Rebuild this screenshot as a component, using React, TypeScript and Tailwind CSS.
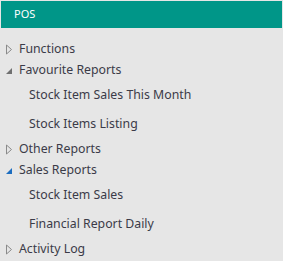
import React from 'react';

type Node = { label: string; state: 'closed' | 'open' | 'active'; children?: string[] };

const nodes: Node[] = [
  { label: 'Functions', state: 'closed' },
  { label: 'Favourite Reports', state: 'open', children: ['Stock Item Sales This Month', 'Stock Items Listing'] },
  { label: 'Other Reports', state: 'closed' },
  { label: 'Sales Reports', state: 'active', children: ['Stock Item Sales', 'Financial Report Daily'] },
  { label: 'Activity Log', state: 'closed' },
];

function Arrow({ state }: { state: Node['state'] }) {
  if (state === 'closed') {
    return (
      <svg width="8" height="11" viewBox="0 0 8 11" className="shrink-0">
        <path d="M1.5 1 L6.5 5.5 L1.5 10 Z" fill="none" stroke="#8a8a8a" strokeWidth="1" />
      </svg>
    );
  }
  return (
    <svg width="8" height="11" viewBox="0 0 8 11" className="shrink-0">
      <path d="M7 3 L7 9 L1 9 Z" fill={state === 'active' ? '#1c6dbf' : '#707070'} />
    </svg>
  );
}

export default function App() {
  return (
    <div className="w-[283px] h-[261px] bg-[#e6e6e6] p-px font-['Noto_Sans',sans-serif] text-[#3b3b48] overflow-hidden">
      <div className="h-[27px] bg-[#009688] text-white text-[11px] flex items-center pl-[13px]">POS</div>
      <div className="mt-[11px] flex flex-col">
        {nodes.map((n) => (
          <div key={n.label}>
            <div className="h-[21px] flex items-center pl-[4px] gap-[6px] text-[12.3px]">
              <Arrow state={n.state} />
              <span>{n.label}</span>
            </div>
            {n.children?.map((c) => (
              <div key={c} className="h-[29px] flex items-center pl-[28px] text-[12.3px]">
                {c}
              </div>
            ))}
          </div>
        ))}
      </div>
    </div>
  );
}
